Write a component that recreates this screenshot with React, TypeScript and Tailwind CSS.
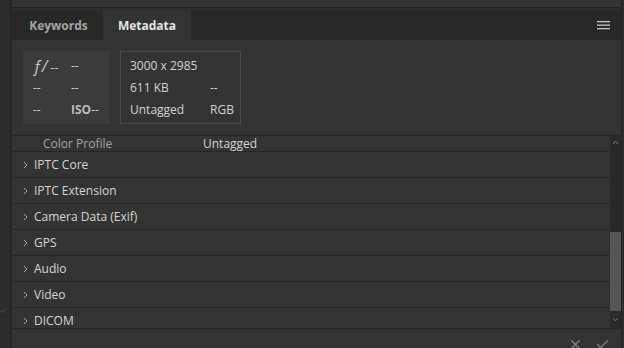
import { ChevronUp, ChevronDown, X, Check } from 'lucide-react'

const sections = [
  'IPTC Core',
  'IPTC Extension',
  'Camera Data (Exif)',
  'GPS',
  'Audio',
  'Video',
  'DICOM',
]

function Hamburger() {
  return (
    <svg width="13" height="9" viewBox="0 0 13 9" className="text-[#c8c8c8]">
      <rect x="0" y="0" width="13" height="1.3" fill="currentColor" />
      <rect x="0" y="3.5" width="13" height="1.3" fill="currentColor" />
      <rect x="0" y="7" width="13" height="1.3" fill="currentColor" />
    </svg>
  )
}

function Caret() {
  return (
    <svg width="5" height="8" viewBox="0 0 5 8" className="text-[#a8a8a8]">
      <path d="M1 1 L4 4 L1 7" fill="none" stroke="currentColor" strokeWidth="1" />
    </svg>
  )
}

function SectionRow({ label }: { label: string }) {
  return (
    <div className="flex h-[26px] shrink-0 items-center border-b border-[#262626] pl-[11px]">
      <Caret />
      <span className="ml-[6px] text-[12px] text-[#d6d6d6]">{label}</span>
    </div>
  )
}

export default function App() {
  return (
    <div
      className="flex h-[348px] w-[624px] overflow-hidden bg-[#333333]"
      style={{ fontFamily: '"Open Sans", "Noto Sans", sans-serif' }}
    >
      {/* left strip */}
      <div className="flex w-[12px] shrink-0 flex-col border-r-2 border-[#242424] bg-[#2c2c2c]">
        <div className="flex-1" />
        <div className="flex h-[12px] items-center border-b border-[#262626]">
          <Check size={6} strokeWidth={1.5} className="text-[#9a9a9a]" />
        </div>
        <div className="h-[31px]" />
      </div>

      {/* main panel */}
      <div className="flex min-w-0 flex-1 flex-col">
        <div className="h-[7px] shrink-0 bg-[#333333]" />
        <div className="h-[1px] shrink-0 bg-[#222222]" />
        <div className="h-[3px] shrink-0 bg-[#2e2e2e]" />

        {/* tab bar */}
        <div className="flex h-[29px] shrink-0 items-stretch bg-[#282828] pl-[2px]">
          <div className="flex w-[89px] items-center justify-center text-[12px] font-bold text-[#a4a4a4]">
            Keywords
          </div>
          <div className="flex w-[88px] items-center justify-center bg-[#333333] text-[12px] font-bold text-[#e4e4e4]">
            Metadata
          </div>
          <div className="flex flex-1 items-center justify-end pr-[11px]">
            <Hamburger />
          </div>
        </div>

        {/* summary boxes */}
        <div className="flex h-[95px] shrink-0 gap-[10px] pl-[11px] pt-[11px]">
          <div className="grid h-[73px] w-[87px] grid-cols-[38px_1fr] grid-rows-[22px_22px_22px] items-center bg-[#3b3b3b] pl-[10px] pt-[4px] text-[12px] text-[#cfcfcf]">
            <span>
              <span className="text-[16px] italic text-[#c8c8c8]">ƒ/</span> --
            </span>
            <span>--</span>
            <span>--</span>
            <span>--</span>
            <span>--</span>
            <span className="font-bold text-[#bdbdbd]">
              ISO<span className="font-normal text-[#cfcfcf]">--</span>
            </span>
          </div>
          <div className="grid h-[73px] w-[121px] grid-cols-[80px_1fr] grid-rows-[22px_22px_22px] items-center border border-[#4c4c4c] pl-[9px] pt-[3px] text-[12px] text-[#d4d4d4]">
            <span className="col-span-2">3000 x 2985</span>
            <span>611 KB</span>
            <span>--</span>
            <span>Untagged</span>
            <span>RGB</span>
          </div>
        </div>

        {/* list + scrollbar */}
        <div className="flex min-h-0 flex-1 border-t border-[#262626]">
          <div className="flex min-w-0 flex-1 flex-col overflow-hidden">
            <div className="flex h-[16px] shrink-0 items-center border-b border-[#262626] text-[12px] leading-[14px]">
              <span className="ml-[31px] w-[160px] text-[#a6a6a6]">Color Profile</span>
              <span className="text-[#d6d6d6]">Untagged</span>
            </div>
            {sections.map((s) => (
              <SectionRow key={s} label={s} />
            ))}
          </div>
          <div className="flex w-[11px] shrink-0 flex-col bg-[#2a2a2a]">
            <div className="flex h-[12px] items-center justify-center">
              <ChevronUp size={9} strokeWidth={1.4} className="text-[#cfcfcf]" />
            </div>
            <div className="h-[84px]" />
            <div className="h-[79px] bg-[#555555]" />
            <div className="flex flex-1 items-center justify-center">
              <ChevronDown size={9} strokeWidth={1.4} className="text-[#bdbdbd]" />
            </div>
          </div>
        </div>

        {/* footer */}
        <div className="flex h-[20px] shrink-0 items-end justify-end gap-[12px] border-t border-[#262626] pr-[11px]">
          <X size={15} strokeWidth={2} className="mb-[-4px] text-[#868686]" />
          <Check size={15} strokeWidth={2} className="mb-[-4px] text-[#868686]" />
        </div>
      </div>

      {/* right edge */}
      <div className="w-[3px] shrink-0 border-l border-[#242424] bg-[#2e2e2e]" />
    </div>
  )
}
